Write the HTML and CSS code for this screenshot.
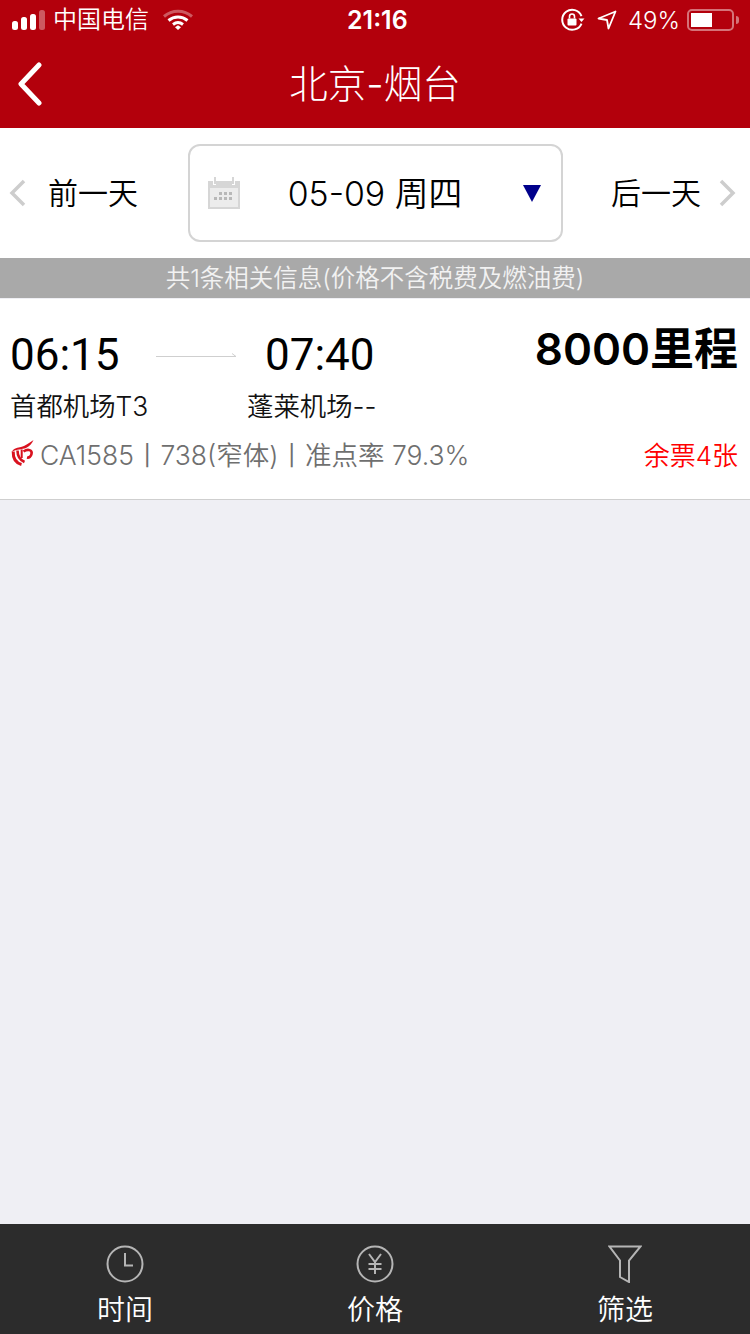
FILE: index.html

```html
<!DOCTYPE html>
<html lang="zh-CN">
<head>
  <meta charset="UTF-8" />
  <meta name="viewport" content="width=device-width, initial-scale=1.0"/>
  <title>北京-烟台</title>
  <link rel="stylesheet" href="styles.css">
</head>
<body>
  <div class="page">
    <header class="header">
      <div class="status">
        <div class="status-left">
          <svg class="signal" width="34" height="24" viewBox="0 0 34 24">
            <rect x="0" y="13" width="6" height="9" rx="2.500" fill="#fff"/>
            <rect x="9" y="9" width="6" height="13" rx="2.500" fill="#fff"/>
            <rect x="18" y="6" width="6" height="16" rx="2.500" fill="#fff"/>
            <rect x="27" y="2" width="6" height="20" rx="2.500" fill="#fff" opacity=".35"/>
          </svg>
          <span class="carrier">中国电信</span>
          <svg class="wifi" width="30" height="22" viewBox="0 0 30 22">
            <path d="M1 7.500C9 .5 21 .5 29 7.500" fill="none" stroke="#fff" stroke-width="3" opacity=".35"/>
            <path d="M5.500 11.500C11 6.800 19 6.800 24.500 11.500" fill="none" stroke="#fff" stroke-width="3"/>
            <path d="M10 15.500C13 13.200 17 13.200 20 15.500" fill="none" stroke="#fff" stroke-width="3"/>
            <path d="M12 18.300L15 16.300L18 18.300L15 21Z" fill="#fff"/>
          </svg>
        </div>
        <span class="clock">21:16</span>
        <div class="status-right">
          <svg width="24" height="24" viewBox="0 0 24 24">
            <path d="M20.500 15.500A10 10 0 1 1 20.500 8" fill="none" stroke="#fff" stroke-width="2"/>
            <path d="M17.500 10.500h6l-3 3.500z" fill="#fff"/>
            <rect x="6.500" y="10.500" width="9" height="7" rx="1" fill="#fff"/>
            <path d="M8.500 10.500V8.500a2.500 2.500 0 0 1 5 0v2" fill="none" stroke="#fff" stroke-width="1.600"/>
          </svg>
          <svg class="locate" width="20" height="20" viewBox="0 0 20 20">
            <path d="M1.500 8.500L18.500 1.500L11.500 18.500L10 10Z" fill="none" stroke="#fff" stroke-width="1.800" stroke-linejoin="round"/>
          </svg>
          <span class="percent">49%</span>
          <div class="battery"><div class="battery-fill"></div></div>
          <div class="battery-tip"></div>
        </div>
      </div>
      <div class="nav">
        <svg class="back" width="28" height="44" viewBox="0 0 28 44">
          <path d="M23 3L5 22L23 41" fill="none" stroke="#fff" stroke-width="5" stroke-linecap="round" stroke-linejoin="round"/>
        </svg>
        <h1 class="title">北京-烟台</h1>
      </div>
    </header>

    <div class="datebar">
      <div class="day-link">
        <svg width="18" height="28" viewBox="0 0 18 28"><path d="M15 2L3 14L15 26" fill="none" stroke="#cdcdcd" stroke-width="3.500"/></svg>
        <span>前一天</span>
      </div>
      <div class="datebox">
        <svg class="cal" width="32" height="32" viewBox="0 0 32 32">
          <path d="M0 4H5V8H8V4H24V8H27V4H32V32H0Z" fill="#d6d6d6"/>
          <rect x="6" y="0" width="2" height="7" fill="#d6d6d6"/>
          <rect x="24" y="0" width="2" height="7" fill="#d6d6d6"/>
          <rect x="2" y="11" width="28" height="19" fill="#ececec"/>
          <path d="M11 15h3v3h-3zM16 15h3v3h-3zM21 15h3v3h-3zM6 20h3v3H6zM11 20h3v3h-3zM16 20h3v3h-3zM21 20h3v3h-3z" fill="#b8b8b8"/>
        </svg>
        <span class="date-text">05-09 周四</span>
        <div class="caret"></div>
      </div>
      <div class="day-link next">
        <span>后一天</span>
        <svg width="18" height="28" viewBox="0 0 18 28"><path d="M3 2L15 14L3 26" fill="none" stroke="#cdcdcd" stroke-width="3.500"/></svg>
      </div>
    </div>

    <div class="notice">共1条相关信息(价格不含税费及燃油费)</div>

    <div class="flight">
      <div class="row-times">
        <span class="time first">06:15</span>
        <svg class="arrow" width="81" height="8" viewBox="0 0 81 8">
          <path d="M0 4.500H80M76 1.500L80 4.500" fill="none" stroke="#cfcfcf" stroke-width="1"/>
        </svg>
        <span class="time">07:40</span>
        <span class="price">8000里程</span>
      </div>
      <div class="row-airports">
        <span class="airport first">首都机场T3</span>
        <span class="airport">蓬莱机场--</span>
      </div>
      <div class="row-info">
        <svg class="logo" width="23" height="26" viewBox="0 0 23 26">
          <path d="M.5 12C3 8 7 7.500 10 7C14 6 18 3 22.500 0C21 3.500 18.500 6.500 15 8C11 9.500 6 9 .5 12Z" fill="#d9121f"/>
          <g fill="none" stroke="#d9121f">
            <path d="M2.200 11.500C2 18 5 23 10.500 24.500" stroke-width="3"/>
            <path d="M6.500 10.500C6.500 16 9 20 13.500 22" stroke-width="2.600"/>
            <path d="M10.700 9.500V18" stroke-width="2"/>
            <path d="M12.500 11.500C17 8.500 21.500 10 20.500 14C20 16.500 18 18 16 17.500" stroke-width="2.600"/>
          </g>
        </svg>
        <span class="info">CA1585丨738(窄体)丨准点率 79.3%</span>
        <span class="left-count">余票4张</span>
      </div>
    </div>

    <div class="spacer"></div>

    <nav class="tabbar">
      <div class="tab">
        <svg width="38" height="38" viewBox="0 0 38 38">
          <circle cx="19" cy="19" r="17.500" fill="none" stroke="#b5b5b5" stroke-width="2"/>
          <path d="M19 8V20.500H27" fill="none" stroke="#b5b5b5" stroke-width="2"/>
        </svg>
        <span>时间</span>
      </div>
      <div class="tab">
        <svg width="38" height="38" viewBox="0 0 38 38">
          <circle cx="19" cy="19" r="17.500" fill="none" stroke="#b5b5b5" stroke-width="2"/>
          <path d="M13 9L19 17L25 9M19 17V29M12.500 19H25.500M12.500 24H25.500" fill="none" stroke="#b5b5b5" stroke-width="2"/>
        </svg>
        <span>价格</span>
      </div>
      <div class="tab">
        <svg width="34" height="38" viewBox="0 0 34 38">
          <path d="M1.500 1.500H32.500L21 15.500V37L12 32V15.500Z" fill="none" stroke="#b5b5b5" stroke-width="2"/>
        </svg>
        <span>筛选</span>
      </div>
    </nav>
  </div>
</body>
</html>
```

FILE: styles.css

```css
* {
  box-sizing: border-box;
}
body {
  margin: 0;
  font-family: Inter, "Noto Sans CJK SC", sans-serif;
  font-weight: 350;
  background-color: #efeff4;
}
svg {
  display: block;
  flex: none;
}
.page {
  display: flex;
  flex-direction: column;
  width: 750px;
  height: 1334px;
  overflow: hidden;
}

.header {
  height: 128px;
  background-color: #b3000c;
  color: #fff;
}
.status {
  display: flex;
  justify-content: space-between;
  align-items: center;
  height: 40px;
  padding: 0 11px 0 12px;
  position: relative;
  font-size: 24px;
}
.status-left,
.status-right {
  display: flex;
  align-items: center;
}
.carrier {
  margin-left: 7px;
  line-height: 40px;
}
.wifi {
  margin-left: 14px;
}
.clock {
  position: absolute;
  left: 347px;
  top: 0;
  line-height: 40px;
  font-size: 25px;
  font-weight: 600;
}
.locate {
  margin-left: 12px;
}
.percent {
  margin-left: 11px;
  font-size: 24px;
}
.battery {
  width: 47px;
  height: 22px;
  margin-left: 7px;
  padding: 2px;
  border: 2px solid rgba(255,255,255,0.45);
  border-radius: 5px;
}
.battery-fill {
  width: 21px;
  height: 14px;
  background-color: #fff;
}
.battery-tip {
  width: 3px;
  height: 8px;
  margin-left: 2px;
  background-color: rgba(255,255,255,0.45);
  border-radius: 0 3px 3px 0;
}
.nav {
  display: flex;
  align-items: center;
  justify-content: center;
  height: 88px;
  position: relative;
}
.back {
  position: absolute;
  left: 16px;
  top: 22px;
}
.title {
  margin: 0;
  font-size: 38.500px;
  font-weight: 300;
  line-height: 84px;
}

.datebar {
  display: flex;
  align-items: center;
  justify-content: space-between;
  height: 130px;
  padding: 0 14px 0 9px;
  background-color: #fff;
  color: #000;
}
.day-link {
  display: flex;
  align-items: center;
  gap: 21px;
  font-size: 30px;
}
.day-link span {
  padding-bottom: 5px;
}
.day-link.next {
  gap: 17px;
}
.datebox {
  display: flex;
  align-items: center;
  width: 375px;
  height: 98px;
  margin-left: 1px;
  padding: 0 20px 0 18px;
  border: 2px solid #d4d4d4;
  border-radius: 12px;
}
.cal {
  margin-bottom: 1px;
}
.date-text {
  flex: 1;
  padding: 0 12px 4px 0;
  text-align: center;
  font-size: 33.800px;
  white-space: nowrap;
}
.caret {
  width: 0;
  height: 0;
  border-left: 9px solid transparent;
  border-right: 9px solid transparent;
  border-top: 17px solid #00008b;
}

.notice {
  height: 40px;
  line-height: 41px;
  text-align: center;
  font-size: 24.500px;
  color: #f2f2f2;
  background-color: #a9a9a9;
}

.flight {
  height: 201px;
  margin-top: 1px;
  padding: 0 12px 0 10px;
  background-color: #fff;
  border-bottom: 1px solid #cfcfcf;
}
.row-times {
  display: flex;
  align-items: center;
  height: 85px;
  padding-top: 27px;
}
.time {
  font-family: Roboto, sans-serif;
  font-weight: 400;
  font-size: 44px;
  color: #000;
}
.time.first {
  width: 146px;
}
.arrow {
  margin-right: 28px;
  margin-top: 2px;
}
.price {
  margin-left: auto;
  margin-top: -18px;
  font-size: 44px;
  font-weight: 600;
  color: #000;
}
.row-airports {
  display: flex;
  align-items: center;
  height: 40px;
}
.airport {
  font-size: 26.400px;
  color: #111;
}
.airport.first {
  width: 237px;
}
.row-info {
  display: flex;
  align-items: center;
  height: 58px;
}
.logo {
  margin-left: 1px;
}
.info {
  margin-left: 6px;
  font-size: 26.500px;
  color: #6f6f6f;
}
.left-count {
  margin-left: auto;
  font-size: 26px;
  color: #f00;
}

.spacer {
  flex: 1;
}

.tabbar {
  display: flex;
  height: 110px;
  background-color: #2c2c2c;
}
.tab {
  flex: 1;
  display: flex;
  flex-direction: column;
  align-items: center;
  padding-top: 21px;
  color: #fff;
  font-size: 28px;
  line-height: 40px;
}
.tab span {
  margin-top: 7px;
}
```
